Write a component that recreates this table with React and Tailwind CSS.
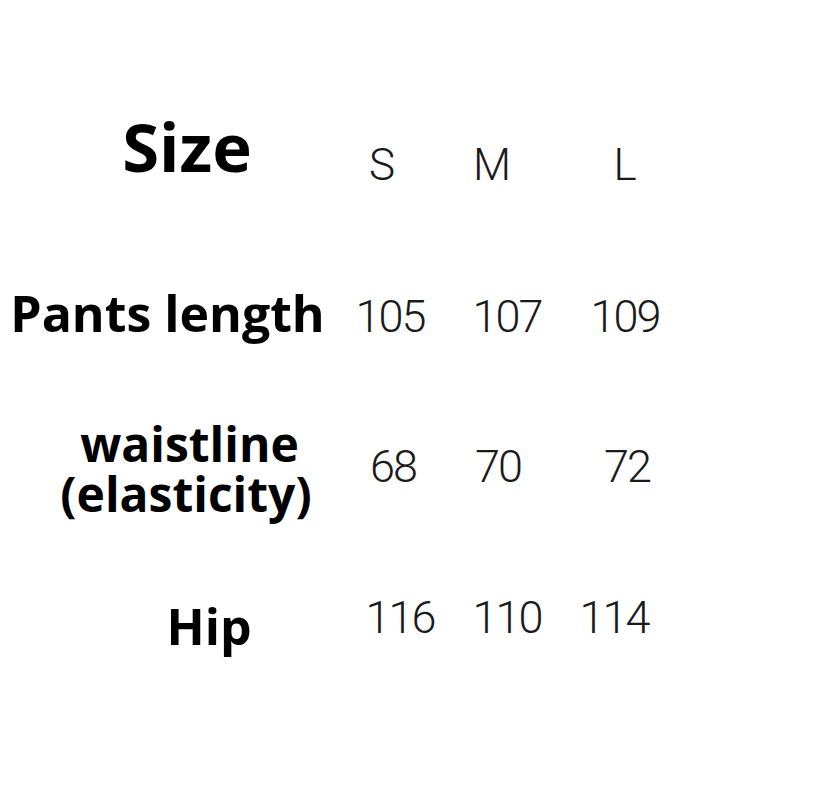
export default function App() {
  const label = "font-['Open_Sans',sans-serif] font-bold text-black";
  const num = "font-['Roboto',sans-serif] font-light text-[#1a1a1a] text-[45px] leading-none w-[100px] text-center tracking-[-2px]";
  return (
    <div className="w-[819px] h-[800px] bg-white overflow-hidden pt-[113px]">
      {/* Row 1 */}
      <div className="flex h-[175px] items-start">
        <div className="w-[340px] flex justify-center pl-[34px]">
          <span className={`${label} text-[67px] leading-none`}>Size</span>
        </div>
        <div className="flex mt-[30px] font-['Roboto',sans-serif] font-light text-[#1a1a1a] text-[44px] leading-none">
          <span className="w-[100px] text-center -ml-[8px]">S</span>
          <span className="w-[100px] text-center ml-[10px]">M</span>
          <span className="w-[100px] text-center ml-[33px]">L</span>
        </div>
      </div>
      {/* Row 2 */}
      <div className="flex h-[131px] items-start">
        <div className="w-[340px] flex justify-center pr-[5px]">
          <span className={`${label} text-[50px] leading-none whitespace-nowrap`}>Pants length</span>
        </div>
        <div className="flex mt-[6px]">
          <span className={`${num} ml-0`}>105</span>
          <span className={`${num} ml-[17px]`}>107</span>
          <span className={`${num} ml-[18px]`}>109</span>
        </div>
      </div>
      {/* Row 3 */}
      <div className="flex h-[176px] items-start">
        <div className="w-[340px] flex flex-col items-center">
          <span className={`${label} text-[48px] leading-[50px] pl-[39px]`}>waistline</span>
          <span className={`${label} text-[48px] leading-[50px] pl-[32px] whitespace-nowrap`}>(elasticity)</span>
        </div>
        <div className="flex mt-[25px]">
          <span className={`${num} ml-[3px]`}>68</span>
          <span className={`${num} ml-[5px]`}>70</span>
          <span className={`${num} ml-[29px]`}>72</span>
        </div>
      </div>
      {/* Row 4 */}
      <div className="flex items-start">
        <div className="w-[340px] flex justify-center pl-[78px] mt-[6px]">
          <span className={`${label} text-[50px] leading-none`}>Hip</span>
        </div>
        <div className="flex">
          <span className={`${num} ml-[10px]`}>116</span>
          <span className={`${num} ml-[7px]`}>110</span>
          <span className={`${num} ml-[7px]`}>114</span>
        </div>
      </div>
    </div>
  );
}
